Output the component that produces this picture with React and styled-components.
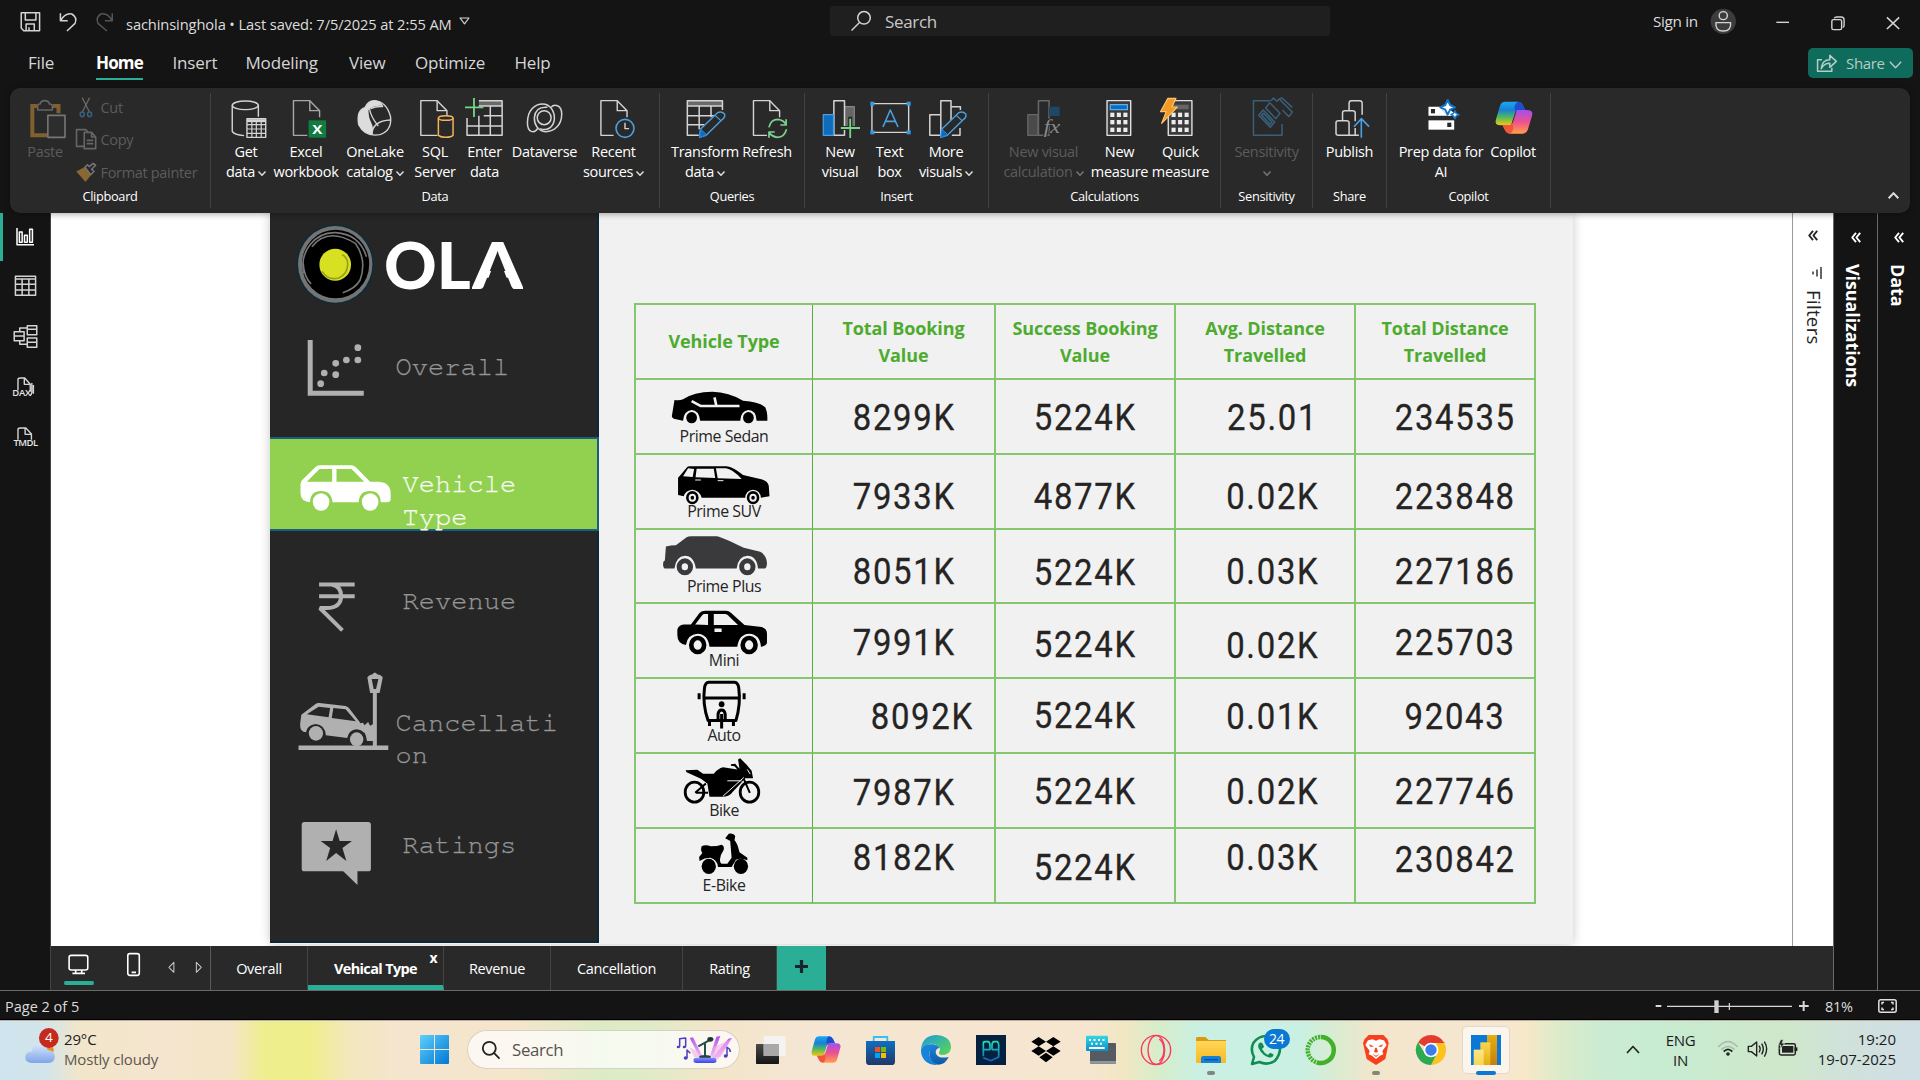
import React from "react";
import styled, { createGlobalStyle } from "styled-components";

const Global = createGlobalStyle`
  * { box-sizing: border-box; }
  body { margin: 0; background: #141414; overflow: hidden; }
`;

const teal = "#2bae96";

const Screen = styled.div`
  width: 1920px;
  height: 1080px;
  display: flex;
  flex-direction: column;
  background: #141414;
  color: #fff;
  font-family: "Segoe UI", "Open Sans", "Noto Sans", sans-serif;
  font-size: 14.5px;
  letter-spacing: -0.022em;
  white-space: nowrap;
`;

/* ---------- drawing helper: fine-grained units, sx per px across, 3 per px down ---------- */
const Svg = styled.svg`
  display: block;
  flex: none;
  overflow: visible;
  fill: none;
  stroke-linejoin: round;
  & path, & rect, & ellipse, & circle, & line { vector-effect: non-scaling-stroke; }
`;
const Pic = ({ x, y, w, h, sx = 3, ox = 0, oy = 0, children, ...rest }) => (
  <Svg
    width={w}
    height={h}
    preserveAspectRatio="none"
    viewBox={`${(x - ox) * sx} ${(y - oy) * 3} ${w * sx} ${h * 3}`}
    {...rest}
  >
    {children}
  </Svg>
);

/* ---------- title bar ---------- */
const TitleBar = styled.div`
  height: 41px;
  display: flex;
  align-items: center;
  color: #dcdcdc;
`;
const TitleLeft = styled.div`
  width: 830px;
  height: 41px;
  display: flex;
  align-items: center;
  padding-left: 14px;
`;
const FileName = styled.span`
  padding-top: 6px;
  margin-left: 7px;
  margin-right: 7px;
  width: 326px;
  font-size: 14.7px;
  letter-spacing: -0.008em;
`;
const SearchBox = styled.div`
  width: 500px;
  height: 30px;
  margin-top: 1px;
  border-radius: 3px;
  background: #1f1f1f;
  display: flex;
  align-items: center;
  gap: 13px;
  padding-left: 20px;
  font-size: 17px;
  color: #c8c8c8;
`;
const SignIn = styled.div`
  margin-left: 323px;
  width: 50px;
  font-size: 15.3px;
`;

/* ---------- menu ---------- */
const MenuBar = styled.div`
  height: 47px;
  display: flex;
  padding-left: 28px;
`;
const MenuItem = styled.div`
  width: ${(p) => p.$w}px;
  font-size: 17px;
  color: ${(p) => (p.$active ? "#fff" : "#d6d6d6")};
  font-weight: ${(p) => (p.$active ? 700 : 400)};
  letter-spacing: ${(p) => (p.$active ? "-0.05em" : "-0.01em")};
  & > span {
    display: inline-block;
    height: 39px;
    line-height: 43px;
    border-bottom: 2px solid ${(p) => (p.$active ? teal : "transparent")};
  }
`;
const ShareButton = styled.div`
  margin: 7px 7px 0 auto;
  width: 105px;
  height: 30px;
  border-radius: 5px;
  background: #0f6b5b;
  color: #b4cdc7;
  display: flex;
  align-items: center;
  padding-left: 9px;
  font-size: 15px;
  gap: 4px;
  & > span { margin-top: -1px; }
`;

/* ---------- ribbon ---------- */
const Ribbon = styled.div`
  position: relative;
  z-index: 2;
  margin: 0 10px;
  height: 125px;
  flex: none;
  border-radius: 10px;
  background: #292929;
  box-shadow: 0 1px 6px rgba(0, 0, 0, 0.35);
  display: flex;
  padding: 5px 0;
`;
const Group = styled.div`
  width: ${(p) => p.$w}px;
  border-right: 1px solid #424242;
  display: flex;
  flex-direction: column;
`;
const GroupItems = styled.div`
  height: 94px;
  padding: 5px 0 0 ${(p) => p.$pad || 0}px;
  display: flex;
`;
const GroupName = styled.div`
  text-align: center;
  font-size: 12.8px;
  line-height: 19px;
  color: #fff;
`;
const RibbonButton = styled.div`
  width: ${(p) => p.$w}px;
  display: flex;
  flex-direction: column;
  align-items: center;
  line-height: 20px;
  color: ${(p) => (p.$off ? "#5c5c5c" : "#fff")};
`;
const ButtonLines = styled.div`
  margin-top: 3.5px;
  display: flex;
  flex-direction: column;
  align-items: center;
`;
const Line = styled.div`
  height: 20px;
  display: flex;
  align-items: center;
  gap: 3px;
`;
const SmallCommands = styled.div`
  display: flex;
  flex-direction: column;
  margin: -6px 0 0 6px;
`;
const SmallCommand = styled.div`
  height: 32.3px;
  flex: none;
  display: flex;
  align-items: center;
  gap: 1px;
  color: #5c5c5c;
  & > span { margin-top: -1px; }
`;
const RibbonEnd = styled.div`
  flex: 1;
  display: flex;
  justify-content: flex-end;
  align-items: flex-end;
  padding: 0 11px 9px 0;
`;

const Chevron = ({ color = "currentColor", w = 8, h = 5, sw = 1.5, up }) => (
  <Svg width={w} height={h} viewBox="0 0 8 5" stroke={color} strokeWidth={sw} preserveAspectRatio="none" style={{ marginTop: up ? 0 : 3 }}>
    <path d={up ? "M.5 4.5L4 .8L7.5 4.5" : "M.5 .5L4 4.2L7.5 .5"} />
  </Svg>
);

const g = "#d4d4d4";
const Doc = ({ x, cut = 0, c = g }) => (
  <g stroke={c} strokeWidth="1.4">
    <path d={`M${x + 27 + cut} 406H${x}V302H${x + 40}L${x + 64} 332V352`} />
    <path d={`M${x + 40} 302V332H${x + 64}`} />
  </g>
);
const Pencil = ({ dx = 0 }) => (
  <g>
    <path d={`M${148 + dx} 388L${190 + dx} 338Q${200 + dx} 332 ${207 + dx} 342Q${210 + dx} 350 ${202 + dx} 358L${162 + dx} 406L${146 + dx} 412Z`} fill="#292929" stroke="#4aa0e0" strokeWidth="1.4" />
    <path d={`M${149 + dx} 388L${163 + dx} 404L${146 + dx} 413Z`} fill="#0a6cc0" stroke="#2b88d8" strokeWidth="1" />
    <path d={`M${184 + dx} 346L${198 + dx} 362`} stroke="#4aa0e0" strokeWidth="1.2" />
  </g>
);
const Calculator = ({ x }) => (
  <g>
    <rect x={x} y="302" width="58" height="104" fill="#3a3a3a" stroke="#e0e0e0" strokeWidth="1.4" />
    {[338, 360, 383].map((y) => [8, 24, 40].map((d) => <rect key={y + "-" + d} x={x + d} y={y} width="10" height="13" fill="#ececec" />))}
  </g>
);
const CopilotMark = ({ id }) => (
  <g>
    <defs>
      <linearGradient id={id + "a"} x1="0" y1="0" x2="0" y2="1">
        <stop offset="0" stopColor="#1ea8f0" /><stop offset=".35" stopColor="#1880d8" /><stop offset=".65" stopColor="#4fb860" /><stop offset="1" stopColor="#f2c810" />
      </linearGradient>
      <linearGradient id={id + "b"} x1="0" y1="0" x2="0" y2="1">
        <stop offset="0" stopColor="#a050f0" /><stop offset=".5" stopColor="#ee5090" /><stop offset="1" stopColor="#ffa04a" />
      </linearGradient>
    </defs>
    <path d="M24 2H54Q62 2 66 12L72 27H60Q50 27 47 38L38 73H14Q-2 73 2 56L12 14Q15 2 24 2Z" fill={`url(#${id}a)`} />
    <path d="M54 2H54Q62 2 66 12L72 27H60Q52 27 49 33Q42 12 54 2Z" fill="#1b4fd0" />
    <path d="M66 98H36Q28 98 24 88L18 73H30Q40 73 43 62L52 27H76Q92 27 88 44L78 86Q75 98 66 98Z" fill={`url(#${id}b)`} />
    <path d="M36 98Q28 98 24 88L18 73H30Q38 73 41 67Q48 88 36 98Z" fill="#f0563a" />
  </g>
);

const RB = ({ c, ox = 0, w, lines, drop, off, children }) => (
  <RibbonButton $w={w} $off={off}>
    <Pic x={c - 20} y={98} w={40} h={40} sx={2.45} ox={ox}>{children}</Pic>
    <ButtonLines>
      {lines.map((t, i) => (
        <Line key={i}>
          {t && <span>{t}</span>}
          {drop && i === lines.length - 1 && <Chevron color={off ? "#777" : "#ddd"} />}
        </Line>
      ))}
    </ButtonLines>
  </RibbonButton>
);

const RibbonBar = () => (
  <Ribbon>
    <Group $w={201}>
      <GroupItems $pad={10.5}>
        <RB c={44.5} w={49} lines={["Paste"]} off>
          <path d="M114 406H78V318H90M128 318H142V340" stroke="#80602f" strokeWidth="4" strokeLinejoin="miter" />
          <path d="M91 330V318Q91 312 97 312Q99 302 108 302Q118 302 120 312Q127 312 127 318V330Z" stroke="#666" strokeWidth="1.6" fill="#292929" />
          <rect x="116" y="346" width="42" height="66" stroke="#777" strokeWidth="1.6" fill="#2d2d2d" />
        </RB>
        <SmallCommands>
          <SmallCommand>
            <Pic x={75} y={97} w={24} h={24} sx={2.45}>
              <path d="M199 296L217 340M217 296L199 340" stroke="#6a6a6a" strokeWidth="1.3" />
              <ellipse cx="199" cy="346" rx="5" ry="7" stroke="#35607f" strokeWidth="1.6" />
              <ellipse cx="217" cy="346" rx="5" ry="7" stroke="#35607f" strokeWidth="1.6" />
            </Pic>
            <span>Cut</span>
          </SmallCommand>
          <SmallCommand>
            <Pic x={75} y={129} w={24} h={24} sx={2.45}>
              <path d="M204 442H185V392H208L213 399" stroke="#666" strokeWidth="1.6" />
              <path d="M204 400H222L232 414V449H204ZM222 400V414H232M210 424H226M210 434H226" stroke="#666" strokeWidth="1.6" />
            </Pic>
            <span>Copy</span>
          </SmallCommand>
          <SmallCommand>
            <Pic x={75} y={161} w={24} h={24} sx={2.45}>
              <path d="M186 515L206 502L220 524L207 544Z" fill="#8a6630" stroke="#8a6a3c" strokeWidth="1" />
              <path d="M206 502L220 524L228 514L222 508L232 496L226 490L216 500L212 494Z" fill="#292929" stroke="#777" strokeWidth="1.4" />
            </Pic>
            <span>Format painter</span>
          </SmallCommand>
        </SmallCommands>
      </GroupItems>
      <GroupName>Clipboard</GroupName>
    </Group>

    <Group $w={449}>
      <GroupItems $pad={9}>
        <RB c={246} w={52} lines={["Get", "data"]} drop>
          <g stroke={g} strokeWidth="1.4">
            <ellipse cx="601" cy="316" rx="32" ry="13" />
            <path d="M569 316V394Q573 404 598 407M633 316V350" />
            <rect x="605" y="356" width="46" height="56" fill="#292929" />
            <path d="M605 362H651" strokeWidth="3" />
            <path d="M605 374H651M605 387H651M605 400H651M617 366V412M628 366V412M640 366V412" strokeWidth="1.2" />
          </g>
        </RB>
        <RB c={306} w={68} lines={["Excel", "workbook"]}>
          <Doc x={719} c="#a8a8a8" cut={7} />
          <rect x="756" y="361" width="43" height="52" fill="#107c41" />
          <text x="777.500" y="402" textAnchor="middle" fontSize="37" fontWeight="700" fill="#fff">X</text>
        </RB>
        <RB c={375.5} w={70} lines={["OneLake", "catalog"]} drop>
          <path d="M918 302Q948 304 958 350Q962 392 932 404Q896 412 880 374Q874 330 896 322Q903 302 918 302Z" stroke={g} strokeWidth="1.4" />
          <path d="M896 322Q904 302 920 301Q934 304 940 318Q918 314 904 330Q904 352 910 366Q918 384 914 404Q888 400 880 372Q874 334 896 322Z" fill="#dcdcdc" />
          <path d="M906 324Q910 352 928 378M912 404Q914 362 958 360M940 320Q922 318 910 326" stroke={g} strokeWidth="1.4" />
        </RB>
        <RB c={435} w={50} lines={["SQL", "Server"]}>
          <Doc x={1031} cut={14} />
          <path d="M1074 354V406Q1080 412 1092 412Q1106 412 1110 406V354" fill="#292929" stroke="#f2b35c" strokeWidth="1.5" />
          <ellipse cx="1092" cy="354" rx="18" ry="7" fill="#292929" stroke="#f2b35c" strokeWidth="1.5" />
        </RB>
        <RB c={484.5} w={49} lines={["Enter", "data"]}>
          <rect x="1172" y="302" width="57" height="16" fill="#6a6a6a" />
          <path d="M1172 302H1229V406H1143V354M1172 318H1229M1184 347H1229M1143 378H1229M1172 347V406M1200 318V406" stroke={g} strokeWidth="1.5" />
          <path d="M1160 294V351M1138 322H1183" stroke="#74d687" strokeWidth="1.8" />
        </RB>
        <RB c={544.5} w={71} lines={["Dataverse"]}>
          <g stroke={g} strokeWidth="1.5">
            <ellipse cx="1332" cy="353" rx="17" ry="21" />
            <path d="M1316 385C1308 402 1291 398 1291 368C1291 330 1310 312 1328 312C1348 312 1358 336 1357 358C1354 384 1338 394 1322 386" />
            <path d="M1349 322C1356 311 1375 314 1375 342C1375 376 1356 395 1336 395C1316 394 1307 372 1308 352C1310 330 1322 320 1340 322" />
          </g>
        </RB>
        <RB c={613.5} w={67} lines={["Recent", "sources"]} drop>
          <Doc x={1471} cut={4} />
          <ellipse cx="1530" cy="385" rx="22" ry="27" stroke="#4aa0e0" strokeWidth="1.6" fill="#292929" />
          <path d="M1530 368V386H1540" stroke={g} strokeWidth="1.4" />
        </RB>
      </GroupItems>
      <GroupName>Data</GroupName>
    </Group>

    <Group $w={145}>
      <GroupItems $pad={12}>
        <RB c={705} ox={640} w={66} lines={["Transform", "data"]} drop>
          <rect x="116" y="302" width="86" height="16" fill="#6a6a6a" />
          <path d="M202 330V302H116V406H144M116 318H202M116 347H182M116 374H158M145 318V388M174 318V352" stroke={g} strokeWidth="1.5" />
          <Pencil />
        </RB>
        <RB c={767} ox={640} w={58} lines={["Refresh"]}>
          <Doc x={278} cut={6} />
          <path d="M316 382Q320 358 338 358Q352 360 358 374M358 358V375H344M359 388Q354 412 337 412Q322 410 316 396M316 413V396H330" stroke="#7fd08f" strokeWidth="1.7" />
        </RB>
      </GroupItems>
      <GroupName>Queries</GroupName>
    </Group>

    <Group $w={184}>
      <GroupItems $pad={10}>
        <RB c={840} ox={640} w={50} lines={["New", "visual"]}>
          <rect x="501" y="320" width="24" height="64" fill="#666" stroke="#888" strokeWidth="1.2" />
          <rect x="475" y="302" width="26" height="104" fill="#292929" stroke={g} strokeWidth="1.5" />
          <rect x="449" y="344" width="25" height="62" fill="#0f6cbd" stroke="#4aa0e0" strokeWidth="1.2" />
          <path d="M515 350V414M488 384H540" stroke="#292929" strokeWidth="4" />
          <path d="M515 356V414M492 384H539" stroke="#74d687" strokeWidth="1.8" />
        </RB>
        <RB c={889.5} ox={640} w={49} lines={["Text", "box"]}>
          <rect x="567" y="311" width="90" height="86" stroke={g} strokeWidth="1.4" />
          {[[563, 305], [652, 305], [563, 391], [652, 391]].map(([x, y]) => <rect key={x + "," + y} x={x} y={y} width="10" height="12" fill="#3a96dd" />)}
          <path d="M594 381L612 330L631 381M600 364H625" stroke="#4aa0e0" strokeWidth="1.6" />
        </RB>
        <RB c={946} ox={640} w={64} lines={["More", "visuals"]} drop>
          <path d="M737 406H710V344H737M762 374V302H737V406M762 320H785V330M764 406H784V384" stroke={g} strokeWidth="1.5" />
          <Pencil dx={591} />
        </RB>
      </GroupItems>
      <GroupName>Insert</GroupName>
    </Group>

    <Group $w={232}>
      <GroupItems $pad={9}>
        <RB c={1043.5} ox={640} w={91} lines={["New visual", "calculation"]} drop off>
          <rect x="949" y="344" width="25" height="62" fill="#4a4a4a" stroke="#666" strokeWidth="1.4" />
          <rect x="975" y="302" width="26" height="104" stroke="#686868" strokeWidth="1.5" />
          <path d="M1001 320H1027V348H1001Z" fill="#1c4766" />
          <text x="988" y="398" fontSize="56" fontFamily="Liberation Serif, serif" fontStyle="italic" fill="#8a8a8a" stroke="#292929" strokeWidth="5" paintOrder="stroke">fx</text>
        </RB>
        <RB c={1119.5} ox={640} w={61} lines={["New", "measure"]}>
          <Calculator x={1143} />
          <rect x="1151" y="314" width="42" height="15" fill="#0f6cbd" stroke="#5ab0f0" strokeWidth="1.2" />
        </RB>
        <RB c={1180.5} ox={640} w={61} lines={["Quick", "measure"]}>
          <Calculator x={1293} />
          <rect x="1301" y="314" width="42" height="14" fill="#666" />
          <path d="M1292 295L1312 295L1302 321L1315 321L1277 370L1288 335L1274 335Z" fill="#f09a28" stroke="#ffc46a" strokeWidth="1.2" />
        </RB>
      </GroupItems>
      <GroupName>Calculations</GroupName>
    </Group>

    <Group $w={92}>
      <GroupItems $pad={0}>
        <RB c={1267} ox={640} w={92} lines={["Sensitivity", ""]} drop off>
          <g stroke="#3a6079" strokeWidth="1.5">
            <path d="M1544 302H1503V406H1573V372" />
            <path d="M1516 346L1527 330L1555 366L1544 382Z" fill="#24323c" />
            <path d="M1523 346L1528 340L1548 366L1543 373Z" />
            <path d="M1533 324L1543 308L1568 340L1558 356ZM1546 302L1552 294L1560 304M1560 304L1566 297L1598 336L1590 350L1574 330M1566 297L1573 294L1598 322" />
          </g>
        </RB>
      </GroupItems>
      <GroupName>Sensitivity</GroupName>
    </Group>

    <Group $w={74}>
      <GroupItems $pad={0}>
        <RB c={1349.5} ox={1280} w={73} lines={["Publish"]}>
          <path d="M136 400V368Q136 362 142 362H162Q168 362 168 368V406H142Q136 406 136 400ZM152 362V338Q152 332 158 332H176Q183 332 183 338V364M168 332V310Q168 302 174 302H194Q200 302 200 310V344M168 406H192M183 384V406" stroke={g} strokeWidth="1.5" />
          <path d="M198 413V356M180 380L198 356L217 380" stroke="#4aa0e0" strokeWidth="1.6" />
        </RB>
      </GroupItems>
      <GroupName>Share</GroupName>
    </Group>

    <Group $w={164}>
      <GroupItems $pad={9.5}>
        <RB c={1441.5} ox={1280} w={89} lines={["Prep data for", "AI"]}>
          <path d="M365 320H392L412 347H365ZM412 347V344L418 329L428 340V347Z" fill="#fff" />
          <path d="M392 320L412 347H428V340Z" fill="#fff" />
          <rect x="371" y="327" width="10" height="13" fill="#292929" />
          <rect x="365" y="361" width="63" height="28" fill="#fff" />
          <rect x="411" y="368" width="10" height="13" fill="#292929" />
          <path d="M412 300L418 315L430 322L418 329L412 344L406 329L394 322L406 315Z" fill="#fff" stroke="#1277c8" strokeWidth="2" />
          <path d="M430 332L433 340L440 344L433 348L430 356L426 348L420 344L426 340Z" fill="#fff" stroke="#1277c8" strokeWidth="1.5" />
        </RB>
        <RB c={1513.5} ox={1280} w={55} lines={["Copilot"]}>
          <g transform="translate(528 303) scale(1.03 1)"><CopilotMark id="rc" /></g>
        </RB>
      </GroupItems>
      <GroupName>Copilot</GroupName>
    </Group>
    <RibbonEnd><Chevron up w={11} h={7} sw={2} color="#ddd" /></RibbonEnd>
  </Ribbon>
);

/* ---------- workspace ---------- */
const Workspace = styled.div`
  height: 778px;
  flex: none;
  display: flex;
  border-bottom: 1px solid #6a6a6a;
`;
const Rail = styled.div`
  width: 51px;
  border-right: 1px solid #444;
`;
const RailItem = styled.div`
  height: ${(p) => p.$h || 50}px;
  border-left: 3px solid ${(p) => (p.$active ? teal : "transparent")};
  display: flex;
  flex-direction: column;
  align-items: center;
  justify-content: center;
  padding-right: 3px;
`;
const RailTag = styled.div`
  font: 600 9.5px/8px "Open Sans", sans-serif;
  letter-spacing: ${(p) => (p.$tight ? "-0.5px" : "-0.2px")};
  color: #e4e4e4;
  margin-top: -3px;
  margin-left: ${(p) => (p.$tight ? 1 : -7)}px;
`;
const Center = styled.div`
  width: 1782px;
  display: flex;
  flex-direction: column;
`;
const CanvasRow = styled.div`
  height: 733px;
  flex: none;
  display: flex;
  background: #fff;
`;
const Canvas = styled.div`
  width: 1741px;
  padding-left: 219px;
  overflow: hidden;
`;
const Page = styled.div`
  width: 1303px;
  height: 731px;
  display: flex;
  background: #f1f1f1;
  box-shadow: 0 0 10px rgba(0, 0, 0, 0.22);
`;

/* ---------- report side navigation ---------- */
const SideNav = styled.div`
  width: 329px;
  height: 730px;
  background: #262626;
  border-right: 2px solid #0b2839;
  border-bottom: 2px solid #0b2839;
`;
const NavRow = styled.div`
  height: ${(p) => p.$h}px;
  display: flex;
  padding-left: 26px;
  background: ${(p) => (p.$active ? "#92d14f" : "transparent")};
  box-shadow: ${(p) => (p.$active ? "inset 0 2px #17607f, inset 0 -2px #17607f, 2px 0 #17607f" : "none")};
  color: ${(p) => (p.$active ? "#f8fcf4" : "#969696")};
`;
const NavText = styled.div`
  width: 174px;
  margin-left: -0.5px;
  padding-top: ${(p) => p.$top}px;
  padding-left: ${(p) => (p.$inset ? 7 : 0)}px;
  font: 400 27px/32.5px "Nimbus Mono PS", "FreeMono", "Liberation Mono", monospace;
  letter-spacing: 0.05px;
  -webkit-text-stroke: 0.25px currentColor;
  white-space: normal;
  overflow-wrap: anywhere;
`;
const Brand = styled.div`
  margin-top: 18px;
  margin-left: -12px;
  font: 900 65px/66px Lato, sans-serif;
  font-kerning: none;
  letter-spacing: 0;
  color: #fff;
  display: flex;
  align-items: flex-start;
`;
const OpenA = styled.span`
  height: 66px;
  clip-path: polygon(0 0, 100% 0, 100% 66px, 82% 66px, 50% 23px, 18% 66px, 0 66px);
  transform: scaleX(1.12);
  transform-origin: left;
  margin-left: 1px;
`;
const n = "#b0b0b0";

const ReportNav = () => (
  <SideNav>
    <NavRow $h={110}>
      <Pic x={296.5} y={213} w={100} h={110} sx={2.529} oy={210}>
        <ellipse cx="849" cy="163" rx="98" ry="119" fill="#0b2c3c" />
        <ellipse cx="849" cy="163" rx="94" ry="115" fill="#747474" />
        <ellipse cx="850" cy="162" rx="85" ry="103" fill="#000" />
        <path d="M770 190A80 98 0 0 1 850 68Q910 72 928 140M790 110Q830 50 900 100Q930 150 912 210Q900 236 868 248M788 222Q770 200 768 160" stroke="#777" strokeWidth="1.6" />
        <ellipse cx="849" cy="164" rx="40" ry="48" fill="#d7e021" />
        <path d="M816 184Q830 212 858 204Q884 190 880 154Q876 138 866 134" stroke="#97a01c" strokeWidth="1.6" />
      </Pic>
      <Brand><span>OL</span><OpenA>A</OpenA></Brand>
    </NavRow>
    <NavRow $h={114}>
      <Pic x={296} y={323} w={100} h={114} sx={2.529} oy={210}>
        <path d="M784.500 390V550H920" stroke={n} strokeWidth="5" strokeLinejoin="miter" />
        {[[811, 521], [820, 489], [849, 494], [849, 460], [876, 450], [905, 450], [905, 413]].map(([x, y]) => (
          <ellipse key={x + "-" + y} cx={x} cy={y} rx="8.500" ry="10" fill={n} />
        ))}
      </Pic>
      <NavText $top={28}>Overall</NavText>
    </NavRow>
    <NavRow $h={94} $active>
      <Pic x={296} y={437} w={100} h={94} sx={2.529} oy={210}>
        <path fillRule="evenodd" fill="#fff" d="M760 822Q760 814 766 808L796 773Q801 766 810 766H888Q895 766 900 772L936 815H958Q988 818 988 850V868Q988 877 978 877H963Q962 843 935 843Q909 843 907 877H841Q838 843 812 843Q785 843 784 877Q760 874 760 850ZM776 815H840V777H808ZM851 815H921L889 777H851Z" />
        <ellipse cx="812" cy="876" rx="21" ry="26" fill="#fff" />
        <ellipse cx="936" cy="876" rx="21" ry="26" fill="#fff" />
      </Pic>
      <NavText $top={31} $inset>Vehicle Type</NavText>
    </NavRow>
    <NavRow $h={119}>
      <Pic x={296} y={531} w={100} h={119} sx={2.529} oy={560}>
        <path d="M807 73.500H897M807 108.500H897M840 74Q862 78 863 108Q862 144 826 144H809L866 211" stroke={n} strokeWidth="4" strokeLinejoin="bevel" />
      </Pic>
      <NavText $top={54} $inset>Revenue</NavText>
    </NavRow>
    <NavRow $h={140}>
      <Pic x={296} y={650} w={100} h={140} sx={2.529} oy={560}>
        <path d="M755 563H982" stroke={n} strokeWidth="4.500" />
        <path d="M948 396V560" stroke={n} strokeWidth="4" />
        <path fillRule="evenodd" fill={n} d="M946 338H950L954 343Q964 345 968 352L960 399H936L929 352Q934 345 942 343ZM940 357L945 387H951L957 357Z" />
        <path fillRule="evenodd" fill={n} d="M762 464L798 432Q802 428 808 429L874 438Q880 440 884 446L912 490L918 488L922 496L931 486L936 497L944 492V543H928Q926 510 902 508Q882 510 878 534L824 526Q822 494 798 492Q776 496 774 517Q758 516 759 492ZM776 463L831 472L835 444L806 440ZM839 474L900 484L874 448L843 444Z" />
        <ellipse cx="799" cy="520" rx="18" ry="22" fill={n} />
        <ellipse cx="902" cy="538" rx="17" ry="21" fill={n} />
      </Pic>
      <NavText $top={56.5}>Cancellation</NavText>
    </NavRow>
    <NavRow $h={151}>
      <Pic x={296} y={790} w={100} h={151} sx={2.529} oy={560}>
        <path fillRule="evenodd" fill={n} d="M770 786H931Q938 786 938 794V926Q938 934 931 934H904V975L868 934H770Q763 934 763 926V794Q763 786 770 786ZM850 808L841 843H811L835 864L825 903L850 879L876 903L866 864L890 843H859Z" />
      </Pic>
      <NavText $top={38.5} $inset>Ratings</NavText>
    </NavRow>
  </SideNav>
);

/* ---------- table ---------- */
const line = "#86c671";
const TableArea = styled.div`
  padding: 90px 0 0 35px;
`;
const Table = styled.div`
  display: grid;
  grid-template-columns: 177px 183px 180px 180px 180px;
  grid-template-rows: 75px repeat(7, 74.8px);
  border-top: 2px solid ${line};
  border-left: 2px solid ${line};
  width: 902px;
`;
const Cell = styled.div`
  border-right: ${(p) => (p.$thin ? "1px solid #55b036" : `2px solid ${line}`)};
  border-bottom: 2px solid ${line};
  display: flex;
  flex-direction: column;
  align-items: center;
  justify-content: center;
`;
const HeadCell = styled(Cell)`
  color: #4dab2f;
  font: 700 18px/26.5px "Open Sans", sans-serif;
  letter-spacing: -0.1px;
`;
const VehicleCell = styled(Cell)`
  justify-content: flex-start;
  color: #252525;
  font-size: 15.9px;
  line-height: 17px;
  letter-spacing: -0.45px;
  & > span { margin-top: -2px; }
`;
const Value = styled.div`
  margin-top: ${(p) => p.$dy * 2}px;
  margin-left: ${(p) => p.$dx * 2 + 1}px;
  font: 400 36.5px/40px Roboto, sans-serif;
  letter-spacing: 1.9px;
  transform: scaleX(0.9);
  -webkit-text-stroke: 0.3px #252423;
  color: #252423;
`;

const Vehicle = ({ top, oy = 290, name, children }) => (
  <VehicleCell $thin>
    <Pic x={663.8} y={top} w={120} h={50} sx={2.8} ox={620} oy={oy}>{children}</Pic>
    <span>{name}</span>
  </VehicleCell>
);

const bg = "#f1f1f1";
const rows = [
  {
    v: (
      <Vehicle top={379.3} name="Prime Sedan">
        <path d="M152 328Q166 330 176 326Q206 303 258 303Q304 304 344 330Q392 334 406 350Q413 364 412 390H382Q380 358 359 358Q338 360 336 390H224Q220 358 200 358Q178 360 176 390L150 384Q143 380 145 374Z" fill="#000" />
        <ellipse cx="200" cy="381" rx="15" ry="17" fill="#000" />
        <ellipse cx="359" cy="381" rx="15" ry="17" fill="#000" />
        <path d="M200 331L226 346H334M264 320L269 344" stroke={bg} strokeWidth="2.600" />
      </Vehicle>
    ),
    c: [["8299K", 1.3], ["5224K", 1.3], ["25.01", 1.3, 7.4], ["234535", 1.3, 9.7]],
  },
  {
    v: (
      <Vehicle top={454} name="Prime SUV">
        <path fillRule="evenodd" d="M186 530Q188 526 196 526H298Q316 528 344 552L392 564Q412 568 416 584L418 616L394 620Q392 598 372 596Q352 598 350 620H228Q222 598 202 596Q182 598 178 616L162 612V560Q174 546 186 530ZM176 556L203 558L207 534L190 532ZM211 559L266 561L262 533H214ZM273 562L340 564Q314 534 296 532H268Z" fill="#000" />
        <ellipse cx="202" cy="620" rx="14" ry="16" fill={bg} stroke="#000" strokeWidth="2.600" /><ellipse cx="202" cy="620" rx="5" ry="6" fill="#000" />
        <ellipse cx="372" cy="620" rx="14" ry="16" fill={bg} stroke="#000" strokeWidth="2.600" /><ellipse cx="372" cy="620" rx="5" ry="6" fill="#000" />
        <path d="M210 567H226M273 569H289" stroke={bg} strokeWidth="1" />
      </Vehicle>
    ),
    c: [["7933K", 5.5], ["4877K", 5.5], ["0.02K", 5.5, 7.6], ["223848", 5.5, 9.7]],
  },
  {
    v: (
      <Vehicle top={528.8} name="Prime Plus">
        <path d="M128 766Q142 762 156 762L186 738Q190 735 200 735H270Q284 737 346 770L392 782Q410 792 411 816Q410 832 404 832H386Q382 794 356 794Q330 796 326 832H212Q206 794 181 794Q156 796 152 832H124Q118 826 121 812L125 808Z" fill="#3a3a3c" />
        <ellipse cx="181" cy="827" rx="16" ry="18" stroke="#3a3a3c" strokeWidth="5" />
        <ellipse cx="356" cy="827" rx="16" ry="18" stroke="#3a3a3c" strokeWidth="5" />
      </Vehicle>
    ),
    c: [["8051K", 6], ["5224K", 7], ["0.03K", 6, 7.6], ["227186", 6, 9.7]],
  },
  {
    v: (
      <Vehicle top={603.6} oy={600} name="Mini">
        <path fillRule="evenodd" d="M178 72H198L222 38Q228 31 238 31H296Q304 31 310 37L348 74L396 80Q411 84 411 100V128Q408 138 394 139Q392 102 361 100Q332 102 328 139H250Q246 102 217 100Q188 102 184 134Q160 130 160 104V88Q162 74 178 72ZM210 72L246 74V41H236Q232 41 229 45ZM262 74H330L300 43Q298 41 292 41H262ZM264 84V95H284V84Z" fill="#000" />
        <ellipse cx="217" cy="134" rx="18" ry="21" stroke="#000" strokeWidth="4.600" />
        <ellipse cx="361" cy="134" rx="18" ry="21" stroke="#000" strokeWidth="4.600" />
      </Vehicle>
    ),
    c: [["7991K", 2.2], ["5224K", 4.7], ["0.02K", 5, 7.6], ["225703", 2.2, 9.7]],
  },
  {
    v: (
      <Vehicle top={678.4} oy={600} name="Auto">
        <path d="M248 245H320Q330 246 332 262Q338 310 324 360H246Q230 310 236 262Q238 246 248 245ZM236 292H334" stroke="#000" strokeWidth="3" />
        <path d="M221 278V296M347 278V296" stroke="#000" strokeWidth="3" />
        <ellipse cx="284" cy="311" rx="8" ry="9" fill="#000" />
        <path d="M274 360V340Q276 328 284 328Q292 328 294 340V360M284 340V384M250 360V376M317 360V376" stroke="#000" strokeWidth="3" />
      </Vehicle>
    ),
    c: [["8092K", 1, 17.8], ["5224K", 0], ["0.01K", 1, 7.6], ["92043", 1.6, 9.7]],
  },
  {
    v: (
      <Vehicle top={753.2} oy={600} name="Bike">
        <ellipse cx="208" cy="574" rx="26" ry="30" stroke="#000" strokeWidth="2.800" />
        <ellipse cx="362" cy="574" rx="26" ry="30" stroke="#000" strokeWidth="2.800" />
        <path d="M183 508L216 507L232 519H262Q274 502 288 499L328 506L320 496L310 495V490L322 489L334 504L330 476L336 472L354 492L368 510L372 532H350L330 556L316 572Q306 588 286 588H250L244 548L226 534L186 514Z" fill="#000" />
        <path d="M210 576L240 548M212 576H246M346 534L363 576" stroke="#000" strokeWidth="2" />
        <path d="M288 586L346 530M300 540H340M356 506L364 520" stroke={bg} strokeWidth="1" />
      </Vehicle>
    ),
    c: [["7987K", 2.5], ["5224K", 1.7], ["0.02K", 1.7, 7.6], ["227746", 1.7, 9.7]],
  },
  {
    v: (
      <Vehicle top={828} oy={600} name="E-Bike">
        <ellipse cx="248" cy="796" rx="20" ry="23" fill="#000" />
        <ellipse cx="338" cy="796" rx="20" ry="23" fill="#000" />
        <path d="M228 736Q238 730 254 736Q272 736 284 731Q292 734 290 746L282 762Q276 786 284 788H300L312 770L308 720L294 712L304 698Q318 696 322 706L320 718Q328 726 334 754L356 770V778Q340 770 324 776L312 798H274Q272 776 252 770Q236 770 222 780L221 768L230 756Q224 748 228 736Z" fill="#000" />
      </Vehicle>
    ),
    c: [["8182K", -7], ["5224K", 3], ["0.03K", -7, 7.6], ["230842", -5.3, 9.7]],
  },
];
const heads = [["Total Booking", "Value"], ["Success Booking", "Value"], ["Avg. Distance", "Travelled"], ["Total Distance", "Travelled"]];

const ReportTable = () => (
  <TableArea>
    <Table>
      <HeadCell $thin><div>Vehicle Type</div></HeadCell>
      {heads.map(([a, b]) => <HeadCell key={a}><div>{a}</div><div>{b}</div></HeadCell>)}
      {rows.map((r, i) => (
        <React.Fragment key={i}>
          {r.v}
          {r.c.map(([t, dy, dx = 0], j) => (
            <Cell key={j}><Value $dy={dy} $dx={dx}>{t}</Value></Cell>
          ))}
        </React.Fragment>
      ))}
    </Table>
  </TableArea>
);

/* ---------- collapsed panes ---------- */
const Pane = styled.div`
  width: ${(p) => p.$w}px;
  background: ${(p) => (p.$light ? "#fff" : "#141414")};
  color: ${(p) => (p.$light ? "#252525" : "#fff")};
  border-left: 1px solid ${(p) => (p.$light ? "#9a9a9a" : "#6a6a6a")};
  display: flex;
  flex-direction: column;
  align-items: center;
  padding-top: ${(p) => (p.$light ? 17 : 19)}px;
`;
const PaneTitle = styled.div`
  writing-mode: vertical-rl;
  font-size: ${(p) => (p.$bold ? 18 : 18.7)}px;
  line-height: 20px;
  font-weight: ${(p) => (p.$bold ? 700 : 500)};
  letter-spacing: ${(p) => (p.$bold ? "-0.006em" : "0.015em")};
  margin-top: ${(p) => p.$top}px;
  margin-right: ${(p) => p.$mr || 0}px;
`;
const Collapse = ({ color }) => (
  <Svg width="10" height="11" viewBox="0 0 10 11" stroke={color} strokeWidth="1.9">
    <path d="M5 .8L1.200 5.500L5 10.200M9.200 .8L5.400 5.500L9.200 10.200" />
  </Svg>
);

/* ---------- page tabs ---------- */
const TabStrip = styled.div`
  height: 44px;
  flex: 1;
  background: #292929;
  display: flex;
`;
const ViewModes = styled.div`
  width: 160px;
  border-right: 1px solid #5a5a5a;
`;
const PageTab = styled.div`
  width: ${(p) => p.$w}px;
  border-right: 1px solid #444;
  border-bottom: ${(p) => (p.$active ? `5px solid ${teal}` : "none")};
  font-weight: ${(p) => (p.$active ? 700 : 400)};
  letter-spacing: ${(p) => (p.$active ? "-0.045em" : "-0.022em")};
  display: flex;
  justify-content: center;
  line-height: 45px;
  position: relative;
`;
const CloseMark = styled.span`
  position: absolute;
  right: 6px;
  top: 2px;
  font-size: 14px;
  line-height: 20px;
`;
const AddTab = styled.div`
  width: 49px;
  background: ${teal};
  display: flex;
  align-items: center;
  justify-content: center;
  padding-bottom: 3px;
`;

/* ---------- status bar ---------- */
const StatusBar = styled.div`
  height: 29px;
  flex: none;
  display: flex;
  align-items: center;
  justify-content: space-between;
  padding: 2px 23px 0 5px;
  border-bottom: 1px solid #000;
  color: #dcdcdc;
  letter-spacing: 0;
`;
const ZoomTools = styled.div`
  display: flex;
  align-items: center;
`;
const ZoomValue = styled.span`
  width: 53px;
  margin-left: 15px;
  letter-spacing: -0.02em;
`;

/* ---------- taskbar ---------- */
const Taskbar = styled.div`
  height: 60px;
  flex: none;
  display: flex;
  color: #1c1c1c;
  border-top: 1px solid #b9b0a0;
  background: linear-gradient(90deg, #cfe4ef 0, #d2e5ea 45px, #f2e6ca 80px, #f5e5cf 160px, #f3e5c6 230px, #eeee8e 265px, #efee8c 310px, #f2e7bd 350px, #f5e5cf 400px, #f4e5cb 520px, #dcebc6 600px, #dfebc8 650px, #f3e5c9 710px, #f5e6d3 800px, #f6e6d0 1090px, #f0e7c2 1125px, #d6edcb 1160px, #c9f0e3 1200px, #c9f0e2 1300px, #dcebcf 1340px, #f2e6cc 1375px, #f7e6d2 1500px, #f7e8c8 1525px, #dcebca 1560px, #cbebd2 1600px, #c7ecd1 1650px, #cfe7cb 1790px, #d0e2da 1840px, #d0dee6 1920px);
`;
const Weather = styled.div`
  width: 420px;
  display: flex;
  padding: 7px 0 0 24px;
  gap: 5px;
  line-height: 20px;
  font-size: 15px;
  letter-spacing: -0.01em;
`;
const WeatherText = styled.div`
  padding-top: 1px;
  & > div + div { color: #5c574f; }
`;
const Pill = styled.div`
  width: 273px;
  height: 39px;
  margin: 9px 3.500px 0 18px;
  border-radius: 20px;
  background: rgba(255, 255, 255, 0.72);
  border: 1px solid rgba(150, 140, 110, 0.35);
  display: flex;
  align-items: center;
  padding: 0 6px 0 13px;
  color: #56534e;
  font-size: 16.8px;
  gap: 11px;
  & > span { flex: 1; }
`;
const AppButton = styled.div`
  width: 55px;
  height: 58px;
  display: flex;
  align-items: center;
  justify-content: center;
  position: relative;
`;
const ActiveTile = styled.div`
  width: 48px;
  height: 48px;
  border-radius: 5px;
  background: rgba(255, 255, 255, 0.6);
  border: 1px solid rgba(200, 190, 170, 0.5);
  display: flex;
  align-items: center;
  justify-content: center;
`;
const RunMark = styled.div`
  position: absolute;
  bottom: 4px;
  width: ${(p) => (p.$on ? 20 : 8)}px;
  height: 4px;
  border-radius: 2px;
  background: ${(p) => (p.$on ? "#0a78d4" : "#85857a")};
`;
const CountBadge = styled.div`
  position: absolute;
  left: 25px;
  top: 8px;
  width: 26px;
  height: 20px;
  border-radius: 10px;
  background: #0a78d4;
  color: #fff;
  font-size: 14px;
  letter-spacing: -0.5px;
  line-height: 20px;
  text-align: center;
`;
const Tray = styled.div`
  flex: 1;
  display: flex;
  padding-left: 112px;
  font-size: 15px;
  line-height: 20px;
`;
const Lang = styled.div`
  width: 50px;
  margin-left: 16px;
  padding-top: 9px;
  text-align: center;
`;
const TrayIcons = styled.div`
  display: flex;
  gap: 10px;
  padding: 18px 0 0 12px;
`;
const Clock = styled.div`
  flex: 1;
  text-align: right;
  padding: 8px 24px 0 0;
  letter-spacing: 0;
`;

const TaskApp = ({ x, run, on, badge, children, ox = 1100 }) => (
  <AppButton>
    {on ? <ActiveTile><Pic x={x} y={1035} w={30} h={30} ox={ox} oy={1015}>{children}</Pic></ActiveTile>
      : <Pic x={x} y={1035} w={30} h={30} ox={ox} oy={1015}>{children}</Pic>}
    {badge && <CountBadge>{badge}</CountBadge>}
    {(run || on) && <RunMark $on={on} />}
  </AppButton>
);

const Grad = ({ id, a, b, v }) => (
  <linearGradient id={id} x1="0" y1="0" x2={v ? 0 : 1} y2="1"><stop offset="0" stopColor={a} /><stop offset="1" stopColor={b} /></linearGradient>
);

const StartBox = styled.div`
  padding-top: 14px;
`;
const StartButton = () => (
  <StartBox>
    <Svg width="29" height="29" viewBox="0 0 29 29">
      <defs><linearGradient id="win" gradientUnits="userSpaceOnUse" x1="0" y1="0" x2="29" y2="29"><stop offset="0" stopColor="#5fd0fb" /><stop offset="1" stopColor="#0078d4" /></linearGradient></defs>
      <path fill="url(#win)" d="M0 1Q0 0 1 0H14V14H0ZM15 0H28Q29 0 29 1V14H15ZM0 15H14V29H1Q0 29 0 28ZM15 15H29V28Q29 29 28 29H15Z" />
    </Svg>
  </StartBox>
);

const TaskbarRow = () => (
  <Taskbar>
    <Weather>
      <Pic x={24} y={1028} w={35} h={38} sx={1.8233} oy={940}>
        <defs><Grad id="cl" a="#d8e6fb" b="#7fa4e8" v /></defs>
        <ellipse cx="88" cy="330" rx="10" ry="16" fill="#f08a20" />
        <path d="M58 369Q46 368 46 352Q46 336 58 334Q60 312 73 312Q85 314 87 330Q99 330 100 350Q100 368 88 369Z" fill="url(#cl)" />
        <ellipse cx="89" cy="294" rx="18" ry="30" fill="#c42b1c" />
        <text x="0" y="0" transform="translate(89 307) scale(.62 1)" textAnchor="middle" fontSize="40" fill="#fff">4</text>
      </Pic>
      <WeatherText><div>29°C</div><div>Mostly cloudy</div></WeatherText>
    </Weather>
    <StartButton />
    <Pill>
      <Svg width="20" height="20" viewBox="0 0 20 20" stroke="#222" strokeWidth="1.8" strokeLinecap="round"><circle cx="8.300" cy="8.300" r="6.500" /><path d="M13.200 13.200L18 18.200" /></Svg>
      <span>Search</span>
      <Pic x={676} y={1036} w={56} h={30} ox={640} oy={1015}>
        <defs><Grad id="lt" a="#b050f0" b="#f8c8f0" v /><Grad id="bs" a="#8a8cff" b="#3a48e0" v /></defs>
        <path d="M146 72L156 70L186 130H176ZM226 68L238 66L216 128H206ZM262 74L273 72L232 134H212Z" fill="url(#lt)" />
        <path d="M218 100L272 74L240 130H214ZM146 100L180 118V130H160Z" fill="#f3a8ec" opacity=".55" />
        <path d="M172 97L210 76M192 88V128" stroke="#22504c" strokeWidth="2" />
        <ellipse cx="208" cy="76" rx="9" ry="7" fill="#1d3838" />
        <ellipse cx="192" cy="129" rx="18" ry="6" fill="#244" />
        <path d="M158 136Q158 131 166 131H218Q226 131 226 136V142Q226 147 218 147H166Q158 147 158 142Z" fill="url(#bs)" />
        <path d="M116 98V74L134 72V98M138 132V108L148 118M258 126V100Q268 104 268 114" stroke="#4a3fc0" strokeWidth="1.500" />
        <g fill="#4a3fc0"><ellipse cx="112" cy="99" rx="5" ry="4" /><ellipse cx="130" cy="99" rx="5" ry="4" /><ellipse cx="134" cy="132" rx="6" ry="5" /><ellipse cx="254" cy="126" rx="6" ry="5" /></g>
      </Pic>
    </Pill>
    <TaskApp x={756} ox={640}>
      <defs><Grad id="tv" a="#4a4a48" b="#151515" v /></defs>
      <rect x="348" y="87" width="69" height="60" rx="2" fill="url(#tv)" />
      <rect x="371" y="63" width="66" height="60" rx="2" fill="#f4f4f4" opacity=".92" />
      <rect x="371" y="87" width="46" height="36" fill="#a9a9a9" />
    </TaskApp>
    <TaskApp x={811} ox={640}>
      <g transform="translate(513 62) scale(1 .83)"><CopilotMark id="tc" /></g>
    </TaskApp>
    <TaskApp x={866} ox={640}>
      <defs><Grad id="ms" a="#0f6fc0" b="#20386a" v /></defs>
      <path d="M701 80V66H742V80" stroke="#35c0f0" strokeWidth="1.800" />
      <path d="M678 78H765V140Q765 150 754 150H690Q678 150 678 140Z" fill="url(#ms)" />
      <rect x="705" y="96" width="15" height="15" fill="#f25022" /><rect x="723" y="96" width="15" height="15" fill="#7fba00" />
      <rect x="705" y="114" width="15" height="15" fill="#00a4ef" /><rect x="723" y="114" width="15" height="15" fill="#ffb900" />
    </TaskApp>
    <TaskApp x={921} ox={640}>
      <defs><Grad id="e1" a="#1a9be0" b="#5fd84a" /><Grad id="e2" a="#1c86dc" b="#0c59a4" v /></defs>
      <path d="M843 102Q848 60 890 60Q933 64 933 98Q931 120 904 120Q892 118 900 106Q900 88 876 86Q852 86 843 104Z" fill="url(#e1)" />
      <path d="M843 104Q852 86 876 88Q894 90 896 96Q874 92 868 112Q866 140 896 148Q876 154 858 140Q842 126 843 104Z" fill="#1683dc" />
      <path d="M876 88Q894 90 898 98Q884 102 888 116Q896 132 926 126Q916 148 896 149Q868 142 868 114Q870 98 880 94Z" fill="url(#e2)" />
    </TaskApp>
    <TaskApp x={976} ox={640}>
      <rect x="1008" y="60" width="90" height="90" fill="#04223f" />
      <defs><Grad id="pg" a="#20e0b0" b="#1560c0" v /></defs>
      <path d="M1030 124V84Q1030 80 1036 80H1044Q1050 82 1050 90V104H1032M1056 104V90Q1056 82 1062 80H1072Q1076 82 1076 90V126L1053 137L1030 128M1056 104H1074" stroke="url(#pg)" strokeWidth="1.700" />
    </TaskApp>
    <TaskApp x={1031} ox={640}>
      <path fill="#000" d="M1196 66L1218 80L1196 94L1174 80ZM1240 66L1262 80L1240 94L1218 80ZM1196 94L1218 108L1196 122L1174 108ZM1240 94L1262 108L1240 122L1218 108ZM1218 113L1238 127L1218 142L1198 127Z" />
    </TaskApp>
    <TaskApp x={1086} ox={640}>
      <defs><Grad id="kb" a="#35d8e0" b="#0a8fd0" v /></defs>
      <rect x="1350" y="84" width="78" height="62" rx="3" fill="#555b61" /><rect x="1350" y="138" width="78" height="8" fill="#8f969c" />
      <rect x="1338" y="62" width="66" height="46" rx="3" fill="url(#kb)" />
      <path d="M1347 75H1396M1353 86H1392" stroke="#fff" strokeWidth="2" strokeDasharray="2 2.500" /><path d="M1347 99H1394" stroke="#fff" strokeWidth="2" />
    </TaskApp>
    <TaskApp x={1141}>
      <g stroke="#fb3862" strokeWidth="1.400"><ellipse cx="168" cy="105" rx="44" ry="44" /><ellipse cx="169" cy="105" rx="25" ry="43" /><path d="M178 72Q192 84 192 105Q192 126 178 138" /></g>
    </TaskApp>
    <TaskApp x={1196} run>
      <defs><Grad id="fe" a="#ffd75a" b="#f8b820" v /></defs>
      <path d="M288 70Q288 66 294 66H316L326 75H378V90H288Z" fill="#d99a10" />
      <rect x="288" y="78" width="90" height="66" rx="3" fill="url(#fe)" />
      <path d="M303 144V130Q303 123 310 123H356Q363 123 363 130V144Z" fill="#1480d8" /><path d="M313 134H353" stroke="#0a4f98" strokeWidth="1.300" />
    </TaskApp>
    <TaskApp x={1251} badge="24">
      <path d="M456 147L462 126Q450 104 460 84Q476 62 500 63Q530 66 540 92Q542 120 524 138Q502 152 478 141Z" stroke="#128c55" strokeWidth="2.600" />
      <path d="M478 84Q486 80 490 90L492 96L486 102Q492 114 504 120L510 113L520 118Q522 126 510 128Q488 124 476 100Q472 90 478 84Z" fill="#128c55" />
    </TaskApp>
    <TaskApp x={1306}>
      <path d="M662 66A39 39 0 1 1 650 142" stroke="#43b02a" strokeWidth="4.500" />
      <path d="M660 66A39 39 0 0 0 650 142" stroke="#43b02a" strokeWidth="4.500" strokeDasharray="2 1" />
    </TaskApp>
    <TaskApp x={1361} run>
      <path d="M806 60H850L862 72L866 84L856 132L828 150L800 132L789 84L794 72Z" fill="#f8401c" />
      <path fill="#fff" fillRule="evenodd" d="M804 76L818 73L828 77L838 73L852 76L860 90L847 108L850 118L840 122L828 132L816 122L806 118L809 108L796 90ZM806 88L812 96L822 94ZM850 88L844 96L834 94ZM826 98H830L834 110L828 113L822 110ZM816 116L828 122L840 116L828 126Z" />
    </TaskApp>
    <TaskApp x={1416}>
      <path d="M993 105L954 82.500A45 45 0 0 1 1032 82.500L1038 84H993Z" fill="#e33b2e" />
      <path d="M993 105H993L1012 84H1033A45 45 0 0 1 993 150L1012 116Z" fill="#fcc31e" />
      <path d="M954 82A45 45 0 0 0 993 150L1011 116L975 116Z" fill="#2da94f" />
      <circle cx="993" cy="105" r="22" fill="#fff" /><circle cx="993" cy="105" r="17" fill="#3b7ded" />
    </TaskApp>
    <TaskApp x={1471} on>
      <rect x="1113" y="60" width="90" height="90" fill="#0a78d4" />
      <defs><Grad id="p1" a="#e6ad10" b="#c87e0e" v /><Grad id="p2" a="#f6d751" b="#e6ad10" v /><Grad id="p3" a="#f9e589" b="#f6d751" v /></defs>
      <rect x="1161" y="60" width="30" height="90" fill="url(#p1)" />
      <rect x="1141" y="82" width="30" height="68" fill="url(#p2)" />
      <rect x="1121" y="104" width="30" height="46" fill="url(#p3)" />
    </TaskApp>
    <Tray>
      <Svg width="14" height="9" viewBox="0 0 14 9" stroke="#222" strokeWidth="1.700" style={{ marginTop: 24 }}><path d="M1 8L7 1.500L13 8" /></Svg>
      <Lang><div>ENG</div><div>IN</div></Lang>
      <TrayIcons>
        <Pic x={1718} y={1040} w={20} h={20} ox={1500} oy={980}>
          <path d="M655 204Q684 172 713 204M664 212Q684 192 704 212" stroke="#a9bfa9" strokeWidth="1.600" />
          <path d="M671 218Q684 204 697 218" stroke="#222" strokeWidth="1.800" /><circle cx="684" cy="225" r="5.500" fill="#222" />
        </Pic>
        <Pic x={1748} y={1040} w={20} h={20} ox={1500} oy={980} stroke="#222" strokeWidth="1.400">
          <path d="M745 202H754L770 189V231L754 218H745ZM777 200Q784 210 777 220M785 194Q795 210 785 226M793 188Q807 210 793 233" />
        </Pic>
        <Pic x={1778} y={1040} w={22} h={20} ox={1500} oy={980}>
          <rect x="838" y="194" width="48" height="34" rx="5" stroke="#222" strokeWidth="1.500" /><path d="M846 201H880V221H846Z" fill="#222" />
          <path d="M888 205V216" stroke="#222" strokeWidth="2.800" />
          <path d="M842 182H850L846 193H854L840 210L843 198H835Z" fill="#222" stroke="#cfe7cb" strokeWidth=".6" />
        </Pic>
      </TrayIcons>
      <Clock><div>19:20</div><div>19-07-2025</div></Clock>
    </Tray>
  </Taskbar>
);

export default function App() {
  return (
    <Screen>
      <Global />
      <TitleBar>
        <TitleLeft>
          <Pic x={14} y={0} w={105} h={41} sx={2.45} stroke={g} strokeWidth="1.500">
            <path d="M52 38H97V92H58L52 84ZM62 38V60H88V38M64 92V72H84V92M71 82V92" />
            <path d="M148 40V62H166M149 61Q160 38 176 42Q190 52 184 70L164 93" />
            <path d="M275 40V62H257M274 61Q264 38 247 42Q234 52 240 70L262 93" stroke="#555" />
          </Pic>
          <FileName>sachinsinghola • Last saved: 7/5/2025 at 2:55 AM</FileName>
          <Svg width="11" height="8" viewBox="0 0 11 8" stroke={g} strokeWidth="1.200"><path d="M1 1H10L5.500 6.800Z" /></Svg>
        </TitleLeft>
        <SearchBox>
          <Svg width="22" height="22" viewBox="0 0 22 22" stroke={g} strokeWidth="1.500"><circle cx="14" cy="7.800" r="6.300" /><path d="M9.500 12.500L1.500 20.500" /></Svg>
          <span>Search</span>
        </SearchBox>
        <SignIn>Sign in</SignIn>
        <Pic x={1703} y={0} w={217} h={41} sx={2.45} ox={1280}>
          <ellipse cx="1086" cy="64" rx="31" ry="38" fill="#3c3c3c" />
          <g stroke={g} strokeWidth="1.400">
            <ellipse cx="1086" cy="47" rx="10" ry="12" />
            <path d="M1068 68H1104Q1106 93 1086 93Q1066 93 1068 68Z" />
            <path d="M1216 67H1247" />
            <path d="M1352 64Q1352 59 1356 59H1372Q1376 59 1376 64V84Q1376 89 1372 89H1356Q1352 89 1352 84ZM1358 55Q1359 51 1364 51H1375Q1382 51 1382 60V76Q1382 81 1379 82" />
            <path d="M1487 52L1517 87M1517 52L1487 87" strokeWidth="1.600" />
          </g>
        </Pic>
      </TitleBar>
      <MenuBar>
        <MenuItem $w={68}><span>File</span></MenuItem>
        <MenuItem $w={76.5} $active><span>Home</span></MenuItem>
        <MenuItem $w={73}><span>Insert</span></MenuItem>
        <MenuItem $w={103.5}><span>Modeling</span></MenuItem>
        <MenuItem $w={66}><span>View</span></MenuItem>
        <MenuItem $w={99.5}><span>Optimize</span></MenuItem>
        <MenuItem $w={60}><span>Help</span></MenuItem>
        <ShareButton>
          <Pic x={1817} y={52} w={25} h={20} sx={2.45} ox={1280} stroke="#b4cdc7" strokeWidth="1.500">
            <path d="M1328 176H1317V211H1352V200M1326 203Q1328 176 1347 176V163L1363 181L1347 199V187Q1334 186 1326 203Z" />
          </Pic>
          <span>Share</span>
          <Chevron w={13} h={8} sw={1.4} />
        </ShareButton>
      </MenuBar>

      <RibbonBar />

      <Workspace>
        <Rail>
          <RailItem $active $h={48}>
            <Pic x={15} y={227} w={20} h={20} sx={2.529} oy={210} stroke="#fff" strokeWidth="1.500">
              <path d="M43 54V104H86M49 66H56V97H49ZM62 76H69V97H62ZM75 58H82V97H75Z" />
            </Pic>
          </RailItem>
          <RailItem>
            <Pic x={14} y={275} w={23} h={22} sx={2.529} oy={210} stroke={g} strokeWidth="1.500">
              <path d="M39 199H90V256H39ZM39 207H90M39 223H90M39 240H90M56 207V256M73 207V256" />
            </Pic>
          </RailItem>
          <RailItem $h={51}>
            <Pic x={13} y={325} w={25} h={24} sx={2.529} oy={210} stroke={g} strokeWidth="1.500">
              <path d="M36 365H61V392H36ZM36 378H61M69 347H93V374H69ZM69 358H93M69 384H93V412H69ZM69 397H93M50 365V354H69M50 392V403H69" />
            </Pic>
          </RailItem>
          <RailItem>
            <Pic x={16} y={376} w={20} h={15} sx={2.529} oy={210} stroke={g} strokeWidth="1.400">
              <path d="M48 538V506Q48 501 54 501H65L79 520V542M64 501V520H79M83 516V545Q82 552 78 554M87 522V548" />
            </Pic>
            <RailTag>DAX</RailTag>
          </RailItem>
          <RailItem>
            <Pic x={16} y={426} w={20} h={15} sx={2.529} oy={210} stroke={g} strokeWidth="1.400">
              <path d="M48 686V656Q48 651 54 651H68L82 669V686M66 651V670H82" />
            </Pic>
            <RailTag $tight>TMDL</RailTag>
          </RailItem>
        </Rail>
        <Center>
          <CanvasRow>
            <Canvas>
              <Page>
                <ReportNav />
                <ReportTable />
              </Page>
            </Canvas>
            <Pane $w={41} $light>
              <Collapse color="#252525" />
              <Svg width="12" height="12" viewBox="0 0 12 12" stroke="#252525" strokeWidth="1.400" style={{ marginTop: 26, marginLeft: 6 }}>
                <path d="M11 0V12M7 2.500V9.500M3 4.500V7.500" />
              </Svg>
              <PaneTitle $top={11} $mr={-2}>Filters</PaneTitle>
            </Pane>
          </CanvasRow>
          <TabStrip>
            <ViewModes>
              <Pic x={51} y={946} w={159} h={44} sx={1.8233} oy={940} stroke="#fff" strokeWidth="1.600">
                <path d="M130 46H156Q160 46 160 52V84Q160 90 156 90H130Q126 90 126 84V52Q126 46 130 46ZM138 90V100M149 90V100M132 100H155" />
                <path d="M237 41H250Q254 41 254 47V100Q254 106 250 106H237Q233 106 233 100V47Q233 41 237 41ZM240 97H248" />
                <path d="M317 67L308 82L317 97ZM358 67L367 82L358 97Z" strokeWidth="1" stroke="#ccc" />
                <rect x="117" y="123" width="54" height="12" rx="3" fill={teal} stroke="none" />
              </Pic>
            </ViewModes>
            <PageTab $w={97}>Overall</PageTab>
            <PageTab $w={136} $active>Vehical Type<CloseMark>x</CloseMark></PageTab>
            <PageTab $w={107}>Revenue</PageTab>
            <PageTab $w={132}>Cancellation</PageTab>
            <PageTab $w={94}>Rating</PageTab>
            <AddTab>
              <Svg width="13" height="13" viewBox="0 0 13 13" stroke="#17252c" strokeWidth="3.200"><path d="M6.500 0V13M0 6.500H13" /></Svg>
            </AddTab>
          </TabStrip>
        </Center>
        <Pane $w={44}>
          <Collapse color="#fff" />
          <PaneTitle $bold $top={21} $mr={6}>Visualizations</PaneTitle>
        </Pane>
        <Pane $w={43}>
          <Collapse color="#fff" />
          <PaneTitle $bold $top={21} $mr={2}>Data</PaneTitle>
        </Pane>
      </Workspace>

      <StatusBar>
        <span>Page 2 of 5</span>
        <ZoomTools>
          <Pic x={1653} y={994} w={157} h={22} ox={1500} oy={980} stroke="#d8d8d8" strokeWidth="1.200">
            <path d="M501 76H876M688 66V87" />
            <path d="M467 75H484M897 75H926M911 60V90" strokeWidth="2" />
            <rect x="643" y="58" width="13" height="38" fill="#d0d0d0" stroke="none" />
          </Pic>
          <ZoomValue>81%</ZoomValue>
          <Svg width="19" height="14" viewBox="0 0 19 14" stroke="#e0e0e0" strokeWidth="1.500">
            <rect x=".8" y=".8" width="17.400" height="12.400" rx="2" /><path d="M6 3.500H4V5.500M4 8.500V10.500H6M13 3.500H15V5.500M15 8.500V10.500H13" />
          </Svg>
        </ZoomTools>
      </StatusBar>
      <TaskbarRow />
    </Screen>
  );
}
